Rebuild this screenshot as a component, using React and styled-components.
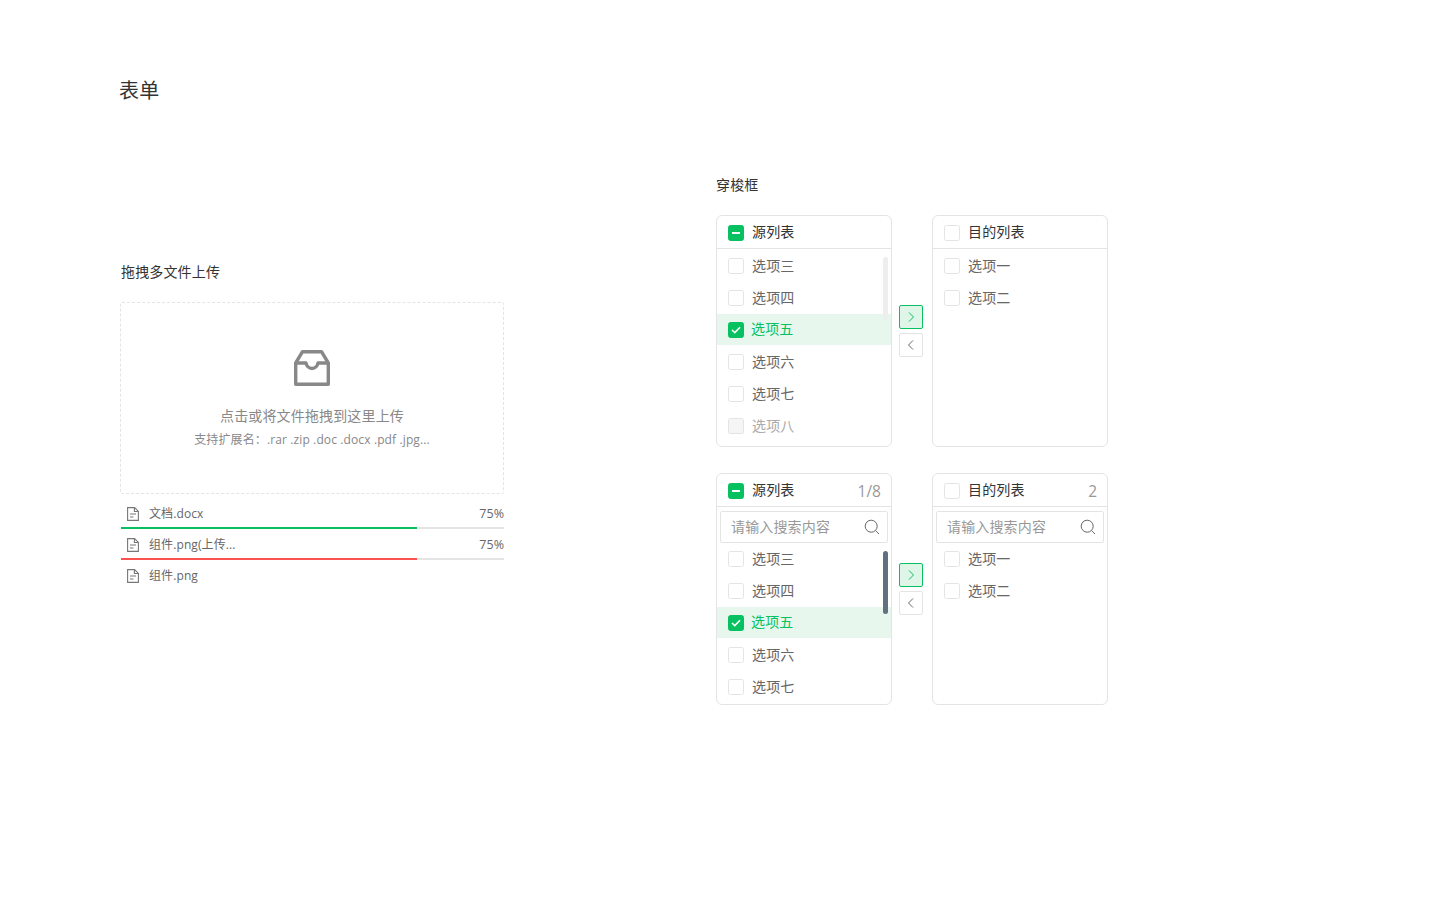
import React from "react";
import styled, { createGlobalStyle } from "styled-components";

const Global = createGlobalStyle`
  html, body { margin: 0; padding: 0; background: #fff; }
  body { font-family: "Open Sans", "Noto Sans CJK SC", sans-serif; color: #333; }
`;
const Page = styled.div`
  width: 1440px; height: 900px; padding: 77px 0 0 120px; box-sizing: border-box; overflow: hidden;
`;
const Title = styled.h1`
  margin: 0 0 0 -1px; font-size: 20px; line-height: 28px; font-weight: 400; color: #333; letter-spacing: 0.3px;
`;
const Columns = styled.div`
  display: flex; margin-top: 70px;
`;
const LeftCol = styled.section`
  width: 384px; margin-top: 87px; margin-right: 212px;
`;
const RightCol = styled.section`
  width: 392px;
`;
const SectionTitle = styled.h2`
  margin: 0; font-size: 14px; line-height: 20px; font-weight: 400; color: #333; letter-spacing: 0.15px;
  padding-left: ${p => p.$indent || 0}px;
`;
const Drop = styled.div`
  margin-top: 20px; height: 192px; box-sizing: border-box; border: 1px dashed #e4e4e4; border-radius: 2px;
  display: flex; flex-direction: column; align-items: center; padding-top: 47px;
`;
const DropTitle = styled.div`
  margin-top: 19px; font-size: 14px; line-height: 22px; color: #888; letter-spacing: 0.15px;
`;
const DropHint = styled.div`
  margin-top: 3px; font-size: 12px; line-height: 20px; color: #888; letter-spacing: 0.12px;
`;
const Files = styled.div`
  margin-top: 5px;
`;
const FileRow = styled.div`
  height: 31px; box-sizing: border-box; position: relative; display: flex; align-items: flex-start;
  padding: 5px 0 0 7px; font-size: 12px; line-height: 20px; color: #666; letter-spacing: 0.1px;
`;
const FileName = styled.span`
  margin-left: 10px; flex: 1;
`;
const Percent = styled.span`
  font-size: 12.5px; letter-spacing: 0;
`;
const Progress = styled.div`
  position: absolute; left: 1px; right: 0; top: 28px; height: 2px; background: #e4e4e4;
`;
const ProgressFill = styled.div`
  height: 100%; width: 77.2%; background: ${p => p.$color};
`;
const Stack = styled.div`
  display: flex; flex-direction: column; gap: 26px; margin-top: 20px;
`;
const Transfer = styled.div`
  display: flex; align-items: center;
`;
const Panel = styled.div`
  width: 176px; height: 232px; box-sizing: border-box; border: 1px solid #e4e4e4; border-radius: 6px;
  overflow: hidden; position: relative; background: #fff;
`;
const Head = styled.div`
  height: 33px; box-sizing: border-box; border-bottom: 1px solid #e4e4e4; display: flex; align-items: flex-start;
  padding: 9px 10px 0 11px; font-size: 14px; color: #333;
`;
const Count = styled.span`
  margin: -2px 0 0 auto; color: #999; font-size: 15.5px; line-height: 20px;
`;
const Label = styled.span`
  flex: none; line-height: 16px; letter-spacing: 0.15px;
  margin-left: ${p => p.$left}px; margin-top: ${p => p.$top}px;
`;
const Box = styled.span`
  width: 16px; height: 16px; box-sizing: border-box; border-radius: 2.5px; flex: none;
  border: 1px solid ${p => (p.$on ? "#07c160" : "#e4e4e4")};
  background: ${p => (p.$on ? "#07c160" : p.$disabled ? "#f5f5f5" : "#fff")};
  display: flex; align-items: center; justify-content: center;
`;
const List = styled.div`
  padding-top: ${p => p.$pad}px;
`;
const Item = styled.div`
  height: 31px; margin-bottom: 1px; box-sizing: border-box; display: flex; align-items: flex-start;
  padding: 8px 0 0 11px; font-size: 14px;
  color: ${p => (p.$active ? "#07c160" : p.$disabled ? "#aaa" : "#666")};
  background: ${p => (p.$active ? "#e8f7ee" : "transparent")};
`;
const Scrollbar = styled.div`
  position: absolute; right: 3px; top: ${p => p.$top}px; width: 5px; height: 63px; border-radius: 3px;
  background: ${p => p.$color};
`;
const Search = styled.div`
  margin: 4px 3px 0; height: 32px; box-sizing: border-box; border: 1px solid #e4e4e4; border-radius: 2px;
  display: flex; align-items: center; justify-content: space-between; padding: 0 7px 0 10px;
  font-size: 14px; color: #999; letter-spacing: 0.15px; line-height: 20px;
`;
const Actions = styled.div`
  display: flex; flex-direction: column; gap: 4px; margin: 0 9px 0 7px;
`;
const Arrow = styled.div`
  width: 24px; height: 24px; box-sizing: border-box; border-radius: 2px; display: flex; align-items: center; justify-content: center;
  border: 1px solid ${p => (p.$on ? "#07c160" : "#e4e4e4")};
  background: ${p => (p.$on ? "#dff5e8" : "#fff")};
  color: ${p => (p.$on ? "#07c160" : "#666")};
`;
const FileGlyph = styled.svg`
  margin-top: 3px; flex: none;
`;

const Check = () => (
  <svg width="10" height="8" viewBox="0 0 10 8" fill="none"><path d="M1 4l2.8 2.6L9 1.2" stroke="#fff" strokeWidth="1.6" /></svg>
);
const Minus = () => (
  <svg width="8" height="2" viewBox="0 0 8 2"><rect width="8" height="2" fill="#fff" /></svg>
);
const Chev = ({ left }) => (
  <svg width="8" height="10" viewBox="0 0 8 10" fill="none">
    <path d={left ? "M6 .5L1.5 5 6 9.5" : "M2 .5L6.5 5 2 9.5"} stroke="currentColor" strokeWidth="1" />
  </svg>
);
const SearchIcon = () => (
  <svg width="16" height="16" viewBox="0 0 16 16" fill="none" stroke="#666" strokeWidth="1">
    <circle cx="7.2" cy="7.2" r="6" /><path d="M11.6 11.6L15 15" />
  </svg>
);
const FileIcon = () => (
  <FileGlyph width="12" height="14" viewBox="0 0 12 14" fill="none" stroke="#777" strokeWidth="1.1">
    <path d="M.6.6h7l3.8 3.8v9H.6z" /><path d="M7.4.6v3.9h4" /><path d="M3 7h6M3 10h3.5" />
  </FileGlyph>
);
const Inbox = () => (
  <svg width="36" height="36" viewBox="0 0 36 36" fill="none" stroke="#888" strokeWidth="3.4" strokeLinejoin="round">
    <path d="M1.7 13L8.5 1.7h19L34.3 13v21.300H1.700z" />
    <path d="M1.7 13h10.300c.5 3 3 5.500 6 5.500s5.500-2.500 6-5.500h10.300" />
  </svg>
);

const SOURCE = ["选项三", "选项四", "选项五", "选项六", "选项七", "选项八"];
const TARGET = ["选项一", "选项二"];

function TransferPanel({ title, state, count, search, items, bar }) {
  return (
    <Panel>
      <Head>
        <Box $on={state}>{state && <Minus />}</Box>
        <Label $left={8} $top={-1}>{title}</Label>
        {count && <Count>{count}</Count>}
      </Head>
      {search && <Search><Label $left={0} $top={-1}>请输入搜索内容</Label><SearchIcon /></Search>}
      <List $pad={search ? 0 : 1}>
        {items.map(t => {
          const active = t === "选项五";
          return (
            <Item key={t} $active={active} $disabled={t === "选项八"}>
              <Box $on={active} $disabled={t === "选项八"}>{active && <Check />}</Box>
              <Label $left={active ? 7 : 8} $top={active ? -1 : 0}>{t}</Label>
            </Item>
          );
        })}
      </List>
      {bar && <Scrollbar $top={bar.top} $color={bar.color} />}
    </Panel>
  );
}

function TransferBlock({ search, bar, source }) {
  return (
    <Transfer>
      <TransferPanel title="源列表" state count={search && "1/8"} search={search} items={source} bar={bar} />
      <Actions>
        <Arrow $on><Chev /></Arrow>
        <Arrow><Chev left /></Arrow>
      </Actions>
      <TransferPanel title="目的列表" count={search && "2"} search={search} items={TARGET} />
    </Transfer>
  );
}

export default function App() {
  return (
    <Page>
      <Global />
      <Title>表单</Title>
      <Columns>
        <LeftCol>
          <SectionTitle $indent={1}>拖拽多文件上传</SectionTitle>
          <Drop>
            <Inbox />
            <DropTitle>点击或将文件拖拽到这里上传</DropTitle>
            <DropHint>支持扩展名：.rar .zip .doc .docx .pdf .jpg...</DropHint>
          </Drop>
          <Files>
            <FileRow><FileIcon /><FileName>文档.docx</FileName><Percent>75%</Percent><Progress><ProgressFill $color="#07c160" /></Progress></FileRow>
            <FileRow><FileIcon /><FileName>组件.png(上传...</FileName><Percent>75%</Percent><Progress><ProgressFill $color="#fa5151" /></Progress></FileRow>
            <FileRow><FileIcon /><FileName>组件.png</FileName></FileRow>
          </Files>
        </LeftCol>
        <RightCol>
          <SectionTitle>穿梭框</SectionTitle>
          <Stack>
            <TransferBlock source={SOURCE} bar={{ top: 41, color: "#eeeeee" }} />
            <TransferBlock source={SOURCE.slice(0, 5)} search bar={{ top: 77, color: "#607080" }} />
          </Stack>
        </RightCol>
      </Columns>
    </Page>
  );
}
